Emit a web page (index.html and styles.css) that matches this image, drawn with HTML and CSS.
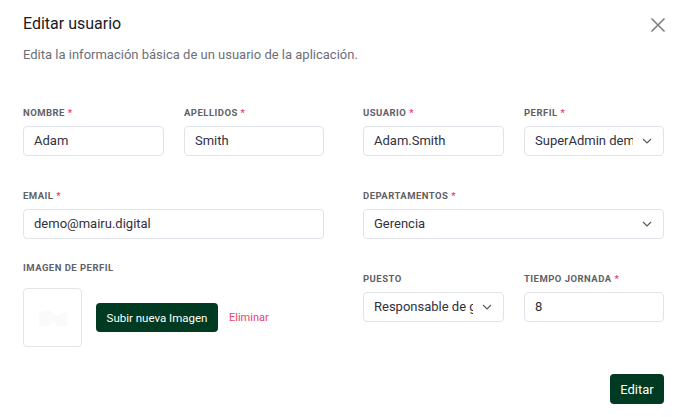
FILE: index.html
```html
<!DOCTYPE html>
<html lang="es">
<head>
<meta charset="utf-8">
<title>Editar usuario</title>
<link rel="stylesheet" href="styles.css">
</head>
<body>
<div class="modal">
  <div class="header">
    <h1 class="title">Editar usuario</h1>
    <button class="close" aria-label="Cerrar">
      <svg width="16" height="16" viewBox="0 0 16 16"><path d="M1.5 1.5 L14.5 14.5 M14.5 1.5 L1.5 14.5" stroke="#7e7e7e" stroke-width="1.6" fill="none"/></svg>
    </button>
  </div>
  <p class="subtitle">Edita la información básica de un usuario de la aplicación.</p>

  <div class="form">
    <div class="half">
      <div class="pair">
        <div class="field">
          <label class="label">Nombre <span class="req">*</span></label>
          <div class="control">Adam</div>
        </div>
        <div class="field">
          <label class="label">Apellidos <span class="req">*</span></label>
          <div class="control">Smith</div>
        </div>
      </div>
      <div class="field">
        <label class="label">Email <span class="req">*</span></label>
        <div class="control">demo@mairu.digital</div>
      </div>
      <div class="image-field">
        <label class="label">Imagen de perfil</label>
        <div class="image-row">
          <div class="avatar">
            <svg width="32" height="20" viewBox="0 0 32 20"><path d="M2 4 L12 2 L20 8 L30 3 L30 18 L20 18 L16 12 L12 18 L2 18 Z" fill="#fafafa"/></svg>
          </div>
          <button class="btn btn-upload">Subir nueva Imagen</button>
          <a class="remove">Eliminar</a>
        </div>
      </div>
    </div>

    <div class="half">
      <div class="pair">
        <div class="field">
          <label class="label">Usuario <span class="req">*</span></label>
          <div class="control">Adam.Smith</div>
        </div>
        <div class="field">
          <label class="label">Perfil <span class="req">*</span></label>
          <div class="control select"><span class="val">SuperAdmin demo</span>
            <svg class="chev" width="10" height="6" viewBox="0 0 10 6"><path d="M1 1 L5 5 L9 1" stroke="#5a5a5a" stroke-width="1.2" fill="none"/></svg></div>
        </div>
      </div>
      <div class="field">
        <label class="label">Departamentos <span class="req">*</span></label>
        <div class="control select"><span class="val">Gerencia</span>
          <svg class="chev" width="10" height="6" viewBox="0 0 10 6"><path d="M1 1 L5 5 L9 1" stroke="#5a5a5a" stroke-width="1.2" fill="none"/></svg></div>
      </div>
      <div class="pair">
        <div class="field">
          <label class="label">Puesto</label>
          <div class="control select"><span class="val">Responsable de gestión</span>
            <svg class="chev" width="10" height="6" viewBox="0 0 10 6"><path d="M1 1 L5 5 L9 1" stroke="#5a5a5a" stroke-width="1.2" fill="none"/></svg></div>
        </div>
        <div class="field">
          <label class="label">Tiempo jornada <span class="req">*</span></label>
          <div class="control">8</div>
        </div>
      </div>
    </div>
  </div>

  <div class="footer">
    <button class="btn btn-submit">Editar</button>
  </div>
</div>
</body>
</html>
```

FILE: styles.css
```css
* { box-sizing: border-box; }
html, body { margin: 0; padding: 0; background: #ffffff; }
body { font-family: Roboto, "Liberation Sans", Arial, sans-serif; color: #3f4254; }

.modal { width: 696px; padding: 14px 32px 0 23px; }

.header { display: flex; justify-content: space-between; align-items: center; height: 20px; }
.title { margin: 0; font-size: 16px; line-height: 20px; font-weight: 400; color: #1b1b24; }
.close { border: 0; background: none; padding: 0; width: 16px; height: 16px; margin-right: -2px; margin-top: 2px; display: flex; }

.subtitle { margin: 12px 0 0; font-size: 13px; line-height: 18px; color: #6c6f7a; }

.form { display: grid; grid-template-columns: 301px 301px; column-gap: 39px; margin-top: 42px; }
.half { display: flex; flex-direction: column; gap: 33px; align-items: stretch; }
.pair { display: grid; grid-template-columns: 141px 140px; column-gap: 20px; }
.field { display: flex; flex-direction: column; }

.label { display: block; font-size: 9.5px; line-height: 13px; font-weight: 700; text-transform: uppercase; letter-spacing: 0.05em; color: #5f6166; margin-bottom: 7px; }
.req { color: #f1416c; }

.control { height: 30px; border: 1px solid #e1e3ea; border-radius: 4px; padding: 0 10px; font-size: 13px; line-height: 28px; color: #2f3140; background: #fff; white-space: nowrap; overflow: hidden; }
.select { display: flex; align-items: center; padding-right: 11px; }
.select .val { flex: 1; overflow: hidden; white-space: nowrap; margin-right: 9px; }
.chev { flex: none; }

.image-field { margin-top: -11px; }
.image-field .label { margin-bottom: 14px; }
.image-row { display: flex; align-items: center; }
.avatar { width: 59px; height: 59px; border: 1px solid #e4e5ea; border-radius: 4px; display: flex; align-items: center; justify-content: center; }
.btn { border: 0; border-radius: 4px; background: #003a22; color: #fff; font-family: Roboto, "Liberation Sans", Arial, sans-serif; cursor: pointer; }
.btn-upload { margin-left: 14px; height: 29px; width: 122px; padding: 0; font-size: 11.5px; }
.remove { margin-left: 11px; font-size: 11px; color: #e8436a; }

.footer { display: flex; justify-content: flex-end; margin-top: 27px; }
.btn-submit { height: 30px; width: 54px; font-size: 13px; padding: 0; }
```
